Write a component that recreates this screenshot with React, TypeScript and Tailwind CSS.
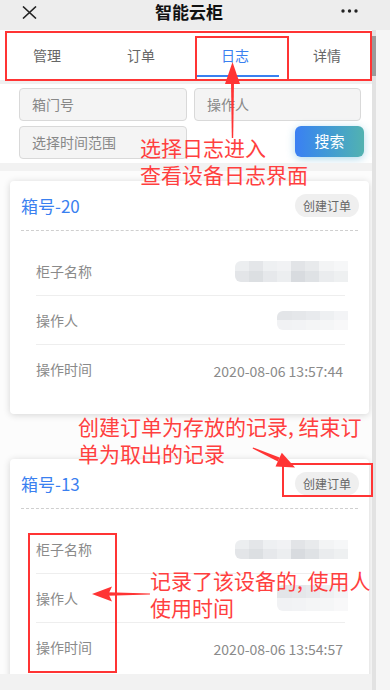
import React from 'react';

const tabs = ['管理', '订单', '日志', '详情'];

type Block = { w: number; top: string; bot: string };

const blurA: Block[] = [
  { w: 14, top: '#eceef0', bot: '#e3e5e8' },
  { w: 14, top: '#e4e6e9', bot: '#dcdfe2' },
  { w: 14, top: '#eef0f2', bot: '#e6e8eb' },
  { w: 14, top: '#f1f2f4', bot: '#eceef0' },
  { w: 14, top: '#e2e4e7', bot: '#d8dbdf' },
  { w: 14, top: '#e8eaec', bot: '#dfe2e5' },
  { w: 15, top: '#f3f4f5', bot: '#eaecee' },
  { w: 14, top: '#f6f7f8', bot: '#eef0f1' },
];

const blurB: Block[] = [
  { w: 15, top: '#e3e5e8', bot: '#f1f2f4' },
  { w: 14, top: '#e5e7ea', bot: '#f2f3f5' },
  { w: 14, top: '#e8eaed', bot: '#f4f5f6' },
  { w: 14, top: '#eef0f2', bot: '#f5f6f7' },
  { w: 14, top: '#f3f4f6', bot: '#f8f8f9' },
];

function Blur({ blocks, h }: { blocks: Block[]; h: number }) {
  return (
    <div className="flex -mr-[5px] overflow-hidden rounded-l-[6px]">
      {blocks.map((b, i) => (
        <div key={i} className="flex flex-col" style={{ width: b.w, height: h }}>
          <div className="flex-1" style={{ background: b.top }} />
          <div className="flex-1" style={{ background: b.bot }} />
        </div>
      ))}
    </div>
  );
}

function Row({ label, children, last }: { label: string; children: React.ReactNode; last?: boolean }) {
  return (
    <div className={`flex h-[49px] items-center justify-between ${last ? '' : 'border-b border-[#eeeeee]'}`}>
      <span className="text-[14px] text-[#8a8a8a]">{label}</span>
      <div className="pr-[2px]">{children}</div>
    </div>
  );
}

function LogCard({ box, time, b1, b2 }: { box: string; time: string; b1: number; b2: number }) {
  return (
    <div className="w-[359px] bg-white rounded-[4px] shadow-[0_1px_7px_rgba(0,0,0,0.16)]">
      <div className="flex h-[49px] items-center justify-between pl-[11px] pr-[10px]">
        <span className="text-[17px] text-[#3a80f0]">{box}</span>
        <span className="flex h-[23px] items-center rounded-full bg-[#efefef] px-[8px] text-[12px] text-[#666]">
          创建订单
        </span>
      </div>
      <div className="mx-[11px] border-t border-dashed border-[#cfcfcf]" />
      <div className="ml-[26px] mr-[24px] pt-[16px] pb-[20px]">
        <Row label="柜子名称">
          <Blur blocks={blurA} h={b1} />
        </Row>
        <Row label="操作人">
          <Blur blocks={blurB} h={b2} />
        </Row>
        <Row label="操作时间" last>
          <span className="text-[14px] text-[#8a8a8a]">{time}</span>
        </Row>
      </div>
    </div>
  );
}

export default function App() {
  return (
    <div className="relative h-[690px] w-[390px] overflow-hidden bg-[#f2f2f2] font-['Noto_Sans_CJK_SC',sans-serif]">
      {/* top bar */}
      <div className="flex h-[30px] items-center bg-[#ededed] pl-[22px] pr-[32px]">
        <svg width="15" height="13" viewBox="0 0 15 13" className="-mt-[6px]">
          <path d="M1 0.5 L14 12.5 M14 0.5 L1 12.5" stroke="#222" strokeWidth="1.6" />
        </svg>
        <span className="ml-[118px] -mt-[6px] text-[17px] font-bold text-[#111]">智能云柜</span>
        <svg width="17" height="4" viewBox="0 0 17 4" className="ml-auto -mt-[8px]">
          <circle cx="2" cy="2" r="1.7" fill="#222" />
          <circle cx="8.5" cy="2" r="1.7" fill="#222" />
          <circle cx="15" cy="2" r="1.7" fill="#222" />
        </svg>
      </div>

      <div className="flex h-[660px]">
        <div className="flex w-[372px] flex-col">
          {/* tabs */}
          <div className="grid h-[50px] grid-cols-[94px_94px_94px_90px] bg-white">
            {tabs.map((t) => (
              <div key={t} className="relative flex items-center justify-center">
                <span className={`text-[14px] ${t === '日志' ? 'text-[#3a80f0]' : 'text-[#666]'}`}>{t}</span>
                {t === '日志' && (
                  <div className="absolute bottom-[3px] left-[9px] right-[3px] h-[2px] bg-[#3a80f0]" />
                )}
              </div>
            ))}
          </div>
          <div className="h-[4px] bg-[#f0f0f0]" />

          {/* search */}
          <div className="bg-white px-[19px] pt-[4px] pb-[4px]">
            <div className="grid grid-cols-[168px_167px] gap-x-[7px] gap-y-[5px]">
              <div className="flex h-[33px] items-center rounded-[4px] border border-[#d9d9d9] bg-[#f4f4f4] pl-[12px] text-[14px] text-[#888]">
                箱门号
              </div>
              <div className="flex h-[33px] items-center rounded-[4px] border border-[#d9d9d9] bg-[#f4f4f4] pl-[12px] text-[14px] text-[#888]">
                操作人
              </div>
              <div className="flex h-[33px] items-center rounded-[4px] border border-[#d9d9d9] bg-[#f4f4f4] pl-[12px] text-[14px] text-[#888]">
                选择时间范围
              </div>
              <div className="flex justify-end -mr-[3px]">
                <div className="flex h-[31px] w-[69px] items-center justify-center rounded-[6px] bg-gradient-to-r from-[#3b7ff3] to-[#52b2b0] text-[15px] text-white shadow-[0_2px_8px_rgba(80,170,210,0.45)]">
                  搜索
                </div>
              </div>
            </div>
          </div>
          <div className="h-[8px] bg-[#f2f2f2]" />

          {/* list */}
          <div className="flex flex-1 flex-col gap-[45px] overflow-hidden bg-[#fcfcfc] px-[10px] pt-[10px]">
            <LogCard box="箱号-20" time="2020-08-06 13:57:44" b1={21} b2={19} />
            <LogCard box="箱号-13" time="2020-08-06 13:54:57" b1={19} b2={26} />
          </div>
          <div className="h-[16px] bg-[#f2f2f2]" />
        </div>

        {/* scroll strip */}
        <div className="w-[18px] border-l-[4px] border-[#e2e2e2] bg-[#f5f5f5]">
          <div className="-ml-[4px] mt-[6px] h-[40px] w-[4px] bg-[#9a9a9a]" />
        </div>
      </div>

      {/* annotations */}
      <div className="absolute left-[5px] top-[31px] h-[50px] w-[367px] border-2 border-[#ff3434]" />
      <div className="absolute left-[195px] top-[36px] h-[45px] w-[94px] border-2 border-[#ff3434]" />
      <div className="absolute left-[282px] top-[463px] h-[34px] w-[91px] border-2 border-[#ff3434]" />
      <div className="absolute left-[28px] top-[533px] h-[140px] w-[89px] border-2 border-[#ff3434]" />

      <svg className="pointer-events-none absolute left-0 top-0" width="390" height="690" viewBox="0 0 390 690">
        <g fill="#ff3434">
          <polygon points="232.5,62 240,84 225,84" />
          <polygon points="231,82 234,82 233.2,138 231.8,138" />
          <polygon points="253,447.5 279.6,457.4 277.9,461.6 252.6,448.6" />
          <polygon points="295,467.5 275.5,466.5 281.8,452.8" />
          <polygon points="92,594 112,586.5 108.5,594 112,601.5" />
          <polygon points="108,592.3 150,593.5 150,594.6 108,595.7" />
        </g>
      </svg>

      <div className="pointer-events-none absolute left-[140px] top-[134px] whitespace-nowrap text-[21px] leading-[27px] text-[#ff3f3f]">
        <div>选择日志进入</div>
        <div>查看设备日志界面</div>
      </div>
      <div className="pointer-events-none absolute left-[78px] top-[413px] whitespace-nowrap text-[21px] leading-[27px] text-[#ff3f3f]">
        <div>创建订单为存放的记录, 结束订</div>
        <div>单为取出的记录</div>
      </div>
      <div className="pointer-events-none absolute left-[150px] top-[567px] whitespace-nowrap text-[21px] leading-[27px] text-[#ff3f3f]">
        <div>记录了该设备的, 使用人</div>
        <div>使用时间</div>
      </div>
    </div>
  );
}
